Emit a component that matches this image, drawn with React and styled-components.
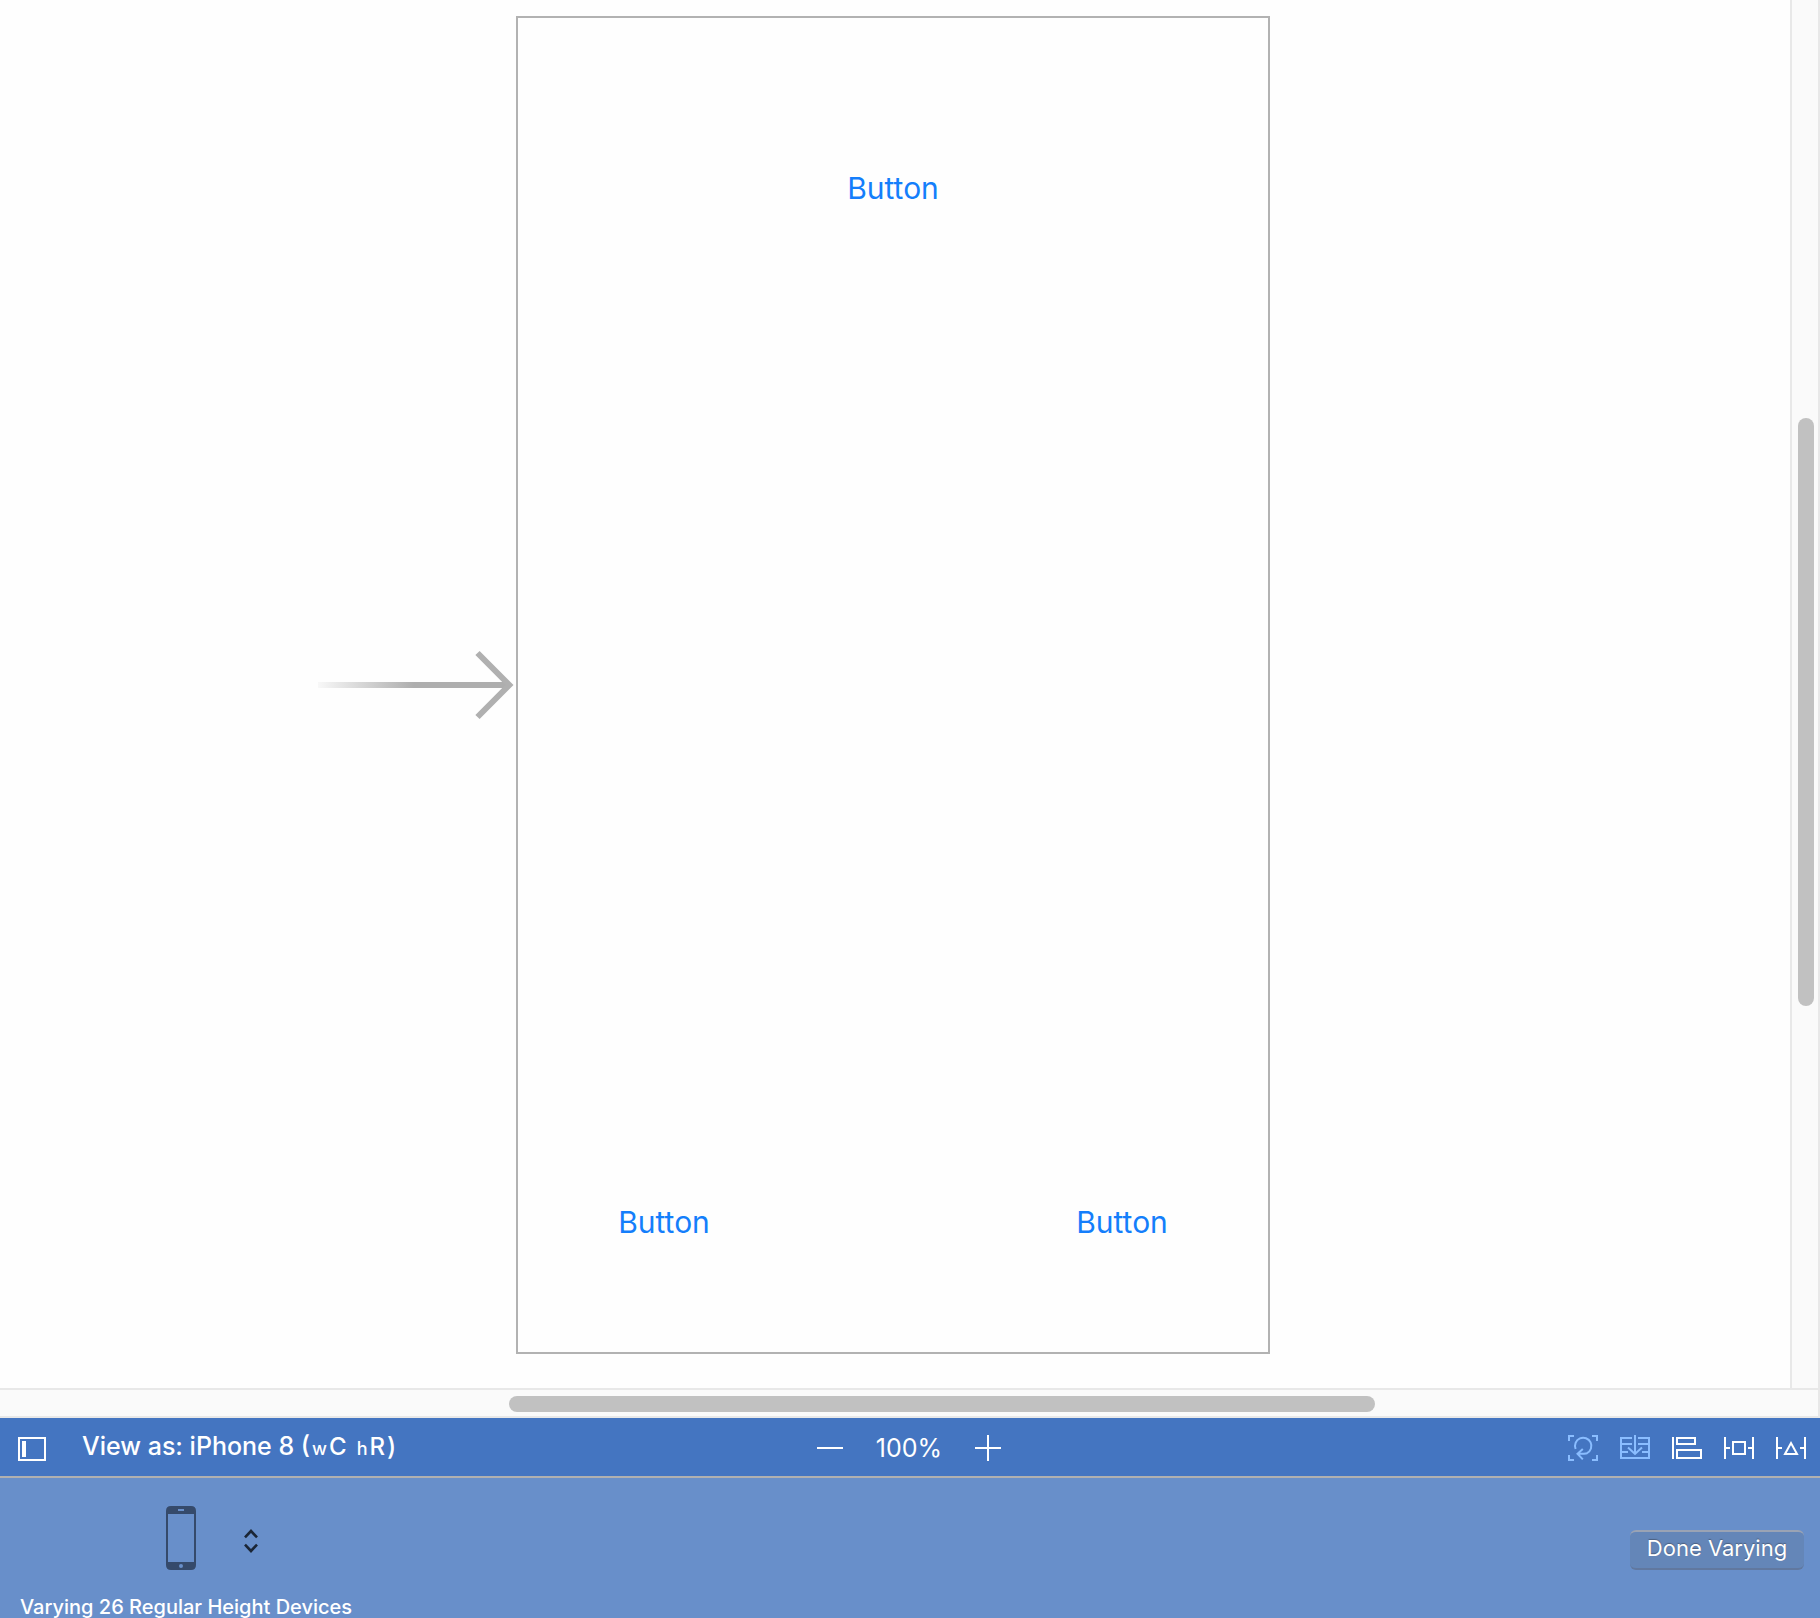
import React from "react";
import styled, { createGlobalStyle } from "styled-components";

const GlobalStyle = createGlobalStyle`
  *, *::before, *::after { box-sizing: border-box; }
  body {
    margin: 0;
    background: #fefefe;
    font-family: Inter, "Liberation Sans", sans-serif;
  }
`;

const Editor = styled.div`
  display: flex;
  flex-direction: column;
  min-height: 100vh;
`;

const Workspace = styled.main`
  flex: 1;
  display: flex;
`;

const Canvas = styled.section`
  flex: 1;
  min-width: 0;
  display: grid;
  grid-template-columns: 1fr auto 1fr;
  align-items: center;
  align-content: start;
  padding: 16px 4px 34px 0;
  background: #fefefe;
`;

const EntryPoint = styled.div`
  display: flex;
  justify-content: flex-end;
`;

const Device = styled.div`
  display: flex;
  flex-direction: column;
  justify-content: space-between;
  box-sizing: content-box;
  width: ${(p) => p.$width * 2}px;
  height: ${(p) => p.$height * 2}px;
  border: 2px solid #b2b2b2;
`;

const DeviceRow = styled.div`
  display: flex;
  justify-content: ${(p) => p.$justify};
  padding: ${(p) => p.$padding};
`;

const PlainButton = styled.button`
  display: flex;
  align-items: center;
  justify-content: center;
  margin: 0;
  padding: 0;
  border: 0;
  background: none;
  color: #fff;
  font: inherit;
  white-space: nowrap;
  cursor: pointer;
`;

const LinkButton = styled(PlainButton)`
  width: 92px;
  color: #147efb;
  font-size: 30px;
  line-height: 36px;
`;

const VerticalTrack = styled.div`
  display: grid;
  grid-template-rows: 418fr 588fr 382fr;
  width: 30px;
  padding: 0 4px 0 6px;
  border: 2px solid #e8e8e8;
  border-width: 0 2px;
  background: #fafafa;
`;

const HorizontalTrack = styled.div`
  display: grid;
  grid-template-columns: 509fr 866fr 443fr;
  height: 30px;
  padding: 6px 0 4px;
  border: 2px solid #e8e8e8;
  border-width: 2px 2px 2px 0;
  background: #fafafa;
`;

const Thumb = styled.div`
  grid-area: ${(p) => p.$area};
  border-radius: 8px;
  background: #c1c1c1;
`;

const Toolbar = styled.header`
  display: grid;
  grid-template-columns: 1fr auto 1fr;
  align-items: center;
  height: 60px;
  padding-top: 2px;
  border-bottom: 2px solid #b0b0b0;
  background: #4475c1;
  color: #fff;
`;

const ToolGroup = styled.div`
  display: flex;
  align-items: center;
  justify-content: ${(p) => p.$justify || "flex-start"};
  gap: ${(p) => p.$gap}px;
  padding: ${(p) => p.$padding || 0};
`;

const ViewAs = styled(PlainButton)`
  align-items: baseline;
  gap: 2px;
  padding-bottom: 2px;
  font-size: 25px;
  font-weight: 500;
  line-height: 32px;
`;

const Traits = styled.span`
  display: flex;
  align-items: baseline;
  gap: 10px;
`;

const Trait = styled.span`
  display: flex;
  align-items: baseline;
  gap: 2px;
  font-size: 24px;
`;

const Axis = styled.span`
  font-size: 18px;
`;

const Zoom = styled(PlainButton)`
  font-size: 25px;
  line-height: 32px;
`;

const VaryPanel = styled.footer`
  display: flex;
  justify-content: space-between;
  align-items: flex-start;
  height: 140px;
  background: #688fca;
  color: #fff;
`;

const DeviceColumn = styled.div`
  display: flex;
  flex-direction: column;
  gap: 24px;
  padding: 28px 0 0 20px;
`;

const DevicePicker = styled(PlainButton)`
  align-self: flex-start;
  gap: 48px;
  padding-left: 146px;
`;

const Caption = styled.p`
  margin: 0;
  font-size: 20px;
  font-weight: 500;
  line-height: 26px;
  height: 24px;
`;

const DoneButton = styled(PlainButton)`
  width: 174px;
  height: 40px;
  margin: 52px 16px 0 0;
  padding-bottom: 4px;
  border: 2px solid transparent;
  border-top-color: #9aa3b4;
  border-bottom-color: #61789f;
  border-width: 2px 0;
  border-radius: 6px;
  background: #6486b8;
  font-size: 22px;
  line-height: 28px;
  text-shadow: 0 -1px 1px rgba(60, 70, 90, 0.6);
`;

const Icon = styled.svg`
  display: block;
  flex: none;
  fill: none;
  stroke: ${(p) => p.$color || "#fff"};
  stroke-width: 2;
`;

function EntryArrow() {
  return (
    <svg width="198" height="70" viewBox="0 0 198 70" aria-hidden="true">
      <defs>
        <linearGradient id="shaft" x1="0" x2="96" y1="0" y2="0" gradientUnits="userSpaceOnUse">
          <stop offset="0" stopColor="#f8f8f8" />
          <stop offset="1" stopColor="#aeaeae" />
        </linearGradient>
      </defs>
      <rect x="0" y="32" width="190" height="6" fill="url(#shaft)" />
      <path d="M159.5 3 191.3 35 159.5 67" fill="none" stroke="#b0b0b0" strokeWidth="6" />
    </svg>
  );
}

const TOOLS = [
  {
    name: "Update frames",
    color: "#8abdff",
    shape: (
      <>
        <path d="M1 6V1H6M24 1H29V6M29 20V25H24M6 25H1V20" />
        <path d="M7.6 14A8.2 8.2 0 1 1 19 18.2Q17.5 18.8 9.5 18.8M14.8 14 9.5 18.8 14.8 24.4" />
      </>
    ),
  },
  {
    name: "Embed in",
    color: "#8abdff",
    shape: (
      <>
        <path d="M12 3H1V23H29V3H18M1 9H12M18 9H29M1 17H8M22 17H29" />
        <path d="M15 0V19M8 12.4 15 19 22 12.4" />
      </>
    ),
  },
  {
    name: "Align",
    shape: <path d="M1 2V24M5 3H23V9H5ZM5 15H29V23H5Z" />,
  },
  {
    name: "Add new constraints",
    shape: <path d="M1 2V24M29 2V24M2 13H6M24 13H28M9 7H21V19H9Z" />,
  },
  {
    name: "Resolve layout issues",
    shape: <path d="M1 2V24M29 2V24M2 13H6M24 13H28M9 19 15 8 21 19Z" />,
  },
];

export default function App() {
  return (
    <>
      <GlobalStyle />
      <Editor>
        <Workspace>
          <Canvas aria-label="Storyboard">
            <EntryPoint>
              <EntryArrow />
            </EntryPoint>
            <Device $width={375} $height={667}>
              <DeviceRow $justify="center" $padding="152px 0 0">
                <LinkButton>Button</LinkButton>
              </DeviceRow>
              <DeviceRow $justify="space-between" $padding="0 100px 112px">
                <LinkButton>Button</LinkButton>
                <LinkButton>Button</LinkButton>
              </DeviceRow>
            </Device>
          </Canvas>
          <VerticalTrack>
            <Thumb $area="2 / 1" />
          </VerticalTrack>
        </Workspace>
        <HorizontalTrack>
          <Thumb $area="1 / 2" />
        </HorizontalTrack>
        <Toolbar>
          <ToolGroup $gap={36} $padding="0 0 0 18px">
            <PlainButton aria-label="Toggle document outline">
              <Icon width="28" height="26" viewBox="0 0 28 26">
                <rect x="1" y="3" width="26" height="22" />
                <path d="M6 6V22" strokeWidth="4" />
              </Icon>
            </PlainButton>
            <ViewAs>
              <span>View as: iPhone 8 (</span>
              <Traits>
                <Trait>
                  <Axis>w</Axis>C
                </Trait>
                <Trait>
                  <Axis>h</Axis>R
                </Trait>
              </Traits>
              <span>)</span>
            </ViewAs>
          </ToolGroup>
          <ToolGroup $gap={33} $padding="0 2px 0 0">
            <PlainButton aria-label="Zoom out">
              <Icon width="26" height="26" viewBox="0 0 26 26">
                <path d="M0 13H26" />
              </Icon>
            </PlainButton>
            <Zoom>100%</Zoom>
            <PlainButton aria-label="Zoom in">
              <Icon width="26" height="26" viewBox="0 0 26 26">
                <path d="M0 13H26M13 0V26" />
              </Icon>
            </PlainButton>
          </ToolGroup>
          <ToolGroup $gap={22} $justify="flex-end" $padding="0 14px 0 0">
            {TOOLS.map((tool) => (
              <PlainButton key={tool.name} aria-label={tool.name}>
                <Icon width="30" height="26" viewBox="0 0 30 26" $color={tool.color}>
                  {tool.shape}
                </Icon>
              </PlainButton>
            ))}
          </ToolGroup>
        </Toolbar>
        <VaryPanel>
          <DeviceColumn>
            <DevicePicker aria-label="Device">
              <svg width="30" height="64" viewBox="0 0 30 64">
                <path
                  fill="#354a6b"
                  fillRule="evenodd"
                  d="M5 0H25Q30 0 30 5V59Q30 64 25 64H5Q0 64 0 59V5Q0 0 5 0ZM2 8V56H28V8ZM12 3V5H18V3ZM15 58A2 2 0 1 0 15 62A2 2 0 1 0 15 58Z"
                />
              </svg>
              <svg width="14" height="36" viewBox="0 0 14 36" fill="none" stroke="#1b2636" strokeWidth="2.6">
                <path d="M1 17.4 7 11 13 17.4M1 24.6 7 31 13 24.6" />
              </svg>
            </DevicePicker>
            <Caption>Varying 26 Regular Height Devices</Caption>
          </DeviceColumn>
          <DoneButton>Done Varying</DoneButton>
        </VaryPanel>
      </Editor>
    </>
  );
}
